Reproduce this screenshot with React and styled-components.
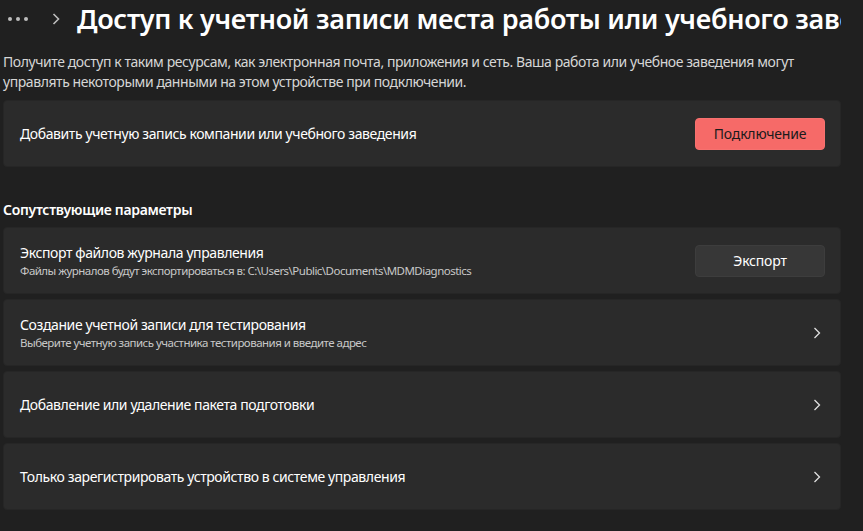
import React from "react";
import styled, { createGlobalStyle } from "styled-components";

const Global = createGlobalStyle`
  html, body { margin: 0; padding: 0; background: #202020; }
  body { font-family: "Noto Sans", "Open Sans", sans-serif; color: #fff; overflow: hidden; }
`;

const Page = styled.div`
  width: 863px;
  height: 531px;
  box-sizing: border-box;
  padding: 0 22px 0 3px;
  display: flex;
  flex-direction: column;
  background: #202020;
  overflow: hidden;
`;

const Header = styled.div`
  display: flex;
  align-items: center;
  height: 38px;
  margin-left: -3px;
  overflow: hidden;
  white-space: nowrap;
`;

const Dots = styled.div`
  display: flex;
  gap: 4px;
  margin-left: 8px;
  width: 22px;
  span {
    width: 4px;
    height: 4px;
    border-radius: 50%;
    background: #bdbdbd;
  }
`;

const Crumb = styled.svg`
  margin-left: 24px;
  margin-right: 17px;
  flex: none;
`;

const Title = styled.h1`
  margin: 0;
  font-size: 27px;
  font-weight: 600;
  letter-spacing: -0.3px;
  color: #ffffff;
  line-height: 38px;
`;

const Description = styled.p`
  margin: 14px 0 8px;
  font-size: 14px;
  line-height: 20px;
  letter-spacing: -0.43px;
  color: #d6d6d6;
  width: 820px;
`;

const Card = styled.div`
  display: flex;
  align-items: center;
  justify-content: space-between;
  height: 67px;
  box-sizing: border-box;
  padding: 0 16px 0 16px;
  background: #2b2b2b;
  border: 1px solid #262626;
  border-radius: 4px;
`;

const CardText = styled.div`
  display: flex;
  flex-direction: column;
`;

const CardTitle = styled.div`
  font-size: 14px;
  line-height: 19px;
  letter-spacing: -0.4px;
  color: #ffffff;
`;

const CardSub = styled.div`
  font-size: 11.5px;
  line-height: 17px;
  letter-spacing: -0.52px;
  color: #c8c8c8;
`;

const Button = styled.button`
  width: 130px;
  height: 32px;
  border-radius: 4px;
  font-family: inherit;
  font-size: 14px;
  letter-spacing: -0.2px;
  cursor: pointer;
  background: ${(p) => (p.$accent ? "#f66a68" : "#373737")};
  color: ${(p) => (p.$accent ? "#1b1b1b" : "#ffffff")};
  border: 1px solid ${(p) => (p.$accent ? "#f7716f" : "#3d3d3d")};
  margin-right: -1px;
`;

const SectionTitle = styled.h2`
  margin: 33px 0 7px;
  font-size: 14px;
  font-weight: 600;
  line-height: 20px;
  letter-spacing: -0.3px;
  color: #ffffff;
`;

const List = styled.div`
  display: flex;
  flex-direction: column;
  gap: 5px;
`;

const Chevron = () => (
  <svg width="8" height="12" viewBox="0 0 8 12" style={{ marginRight: 3 }}>
    <path d="M1.5 1 L6.5 6 L1.5 11" fill="none" stroke="#e0e0e0" strokeWidth="1.3" />
  </svg>
);

export default function App() {
  return (
    <>
      <Global />
      <Page>
        <Header>
          <Dots>
            <span />
            <span />
            <span />
          </Dots>
          <Crumb width="8" height="12" viewBox="0 0 8 12">
            <path d="M1.5 1 L6.5 6 L1.5 11" fill="none" stroke="#bdbdbd" strokeWidth="1.6" />
          </Crumb>
          <Title>Доступ к учетной записи места работы или учебного заведения</Title>
        </Header>
        <Description>
          Получите доступ к таким ресурсам, как электронная почта, приложения и сеть. Ваша работа или учебное заведения могут управлять некоторыми данными на этом устройстве при подключении.
        </Description>
        <Card>
          <CardTitle>Добавить учетную запись компании или учебного заведения</CardTitle>
          <Button $accent>Подключение</Button>
        </Card>
        <SectionTitle>Сопутствующие параметры</SectionTitle>
        <List>
          <Card>
            <CardText>
              <CardTitle>Экспорт файлов журнала управления</CardTitle>
              <CardSub>Файлы журналов будут экспортироваться в: C:\Users\Public\Documents\MDMDiagnostics</CardSub>
            </CardText>
            <Button>Экспорт</Button>
          </Card>
          <Card>
            <CardText>
              <CardTitle>Создание учетной записи для тестирования</CardTitle>
              <CardSub>Выберите учетную запись участника тестирования и введите адрес</CardSub>
            </CardText>
            <Chevron />
          </Card>
          <Card>
            <CardTitle>Добавление или удаление пакета подготовки</CardTitle>
            <Chevron />
          </Card>
          <Card>
            <CardTitle>Только зарегистрировать устройство в системе управления</CardTitle>
            <Chevron />
          </Card>
        </List>
      </Page>
    </>
  );
}
